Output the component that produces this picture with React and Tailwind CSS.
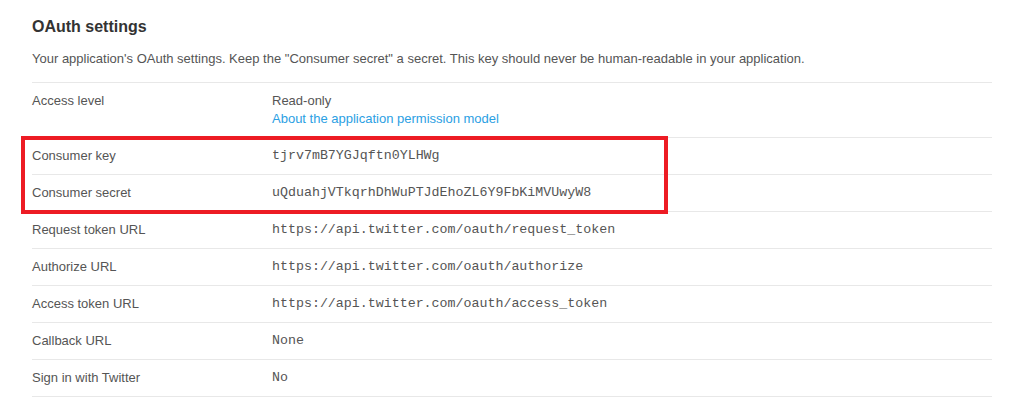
import React from 'react';

const rows = [
  { label: 'Access level', value: 'Read-only', link: 'About the application permission model', plain: true },
  { label: 'Consumer key', value: 'tjrv7mB7YGJqftn0YLHWg' },
  { label: 'Consumer secret', value: 'uQduahjVTkqrhDhWuPTJdEhoZL6Y9FbKiMVUwyW8' },
  { label: 'Request token URL', value: 'https://api.twitter.com/oauth/request_token' },
  { label: 'Authorize URL', value: 'https://api.twitter.com/oauth/authorize' },
  { label: 'Access token URL', value: 'https://api.twitter.com/oauth/access_token' },
  { label: 'Callback URL', value: 'None' },
  { label: 'Sign in with Twitter', value: 'No' },
];

function Row({ row }) {
  return (
    <div className="flex border-b border-[#e8e8e8] py-[9px] leading-[18px]">
      <div className="w-[240px] shrink-0 text-[13px] text-[#555]">{row.label}</div>
      <div className="flex flex-col">
        {row.plain ? (
          <>
            <span className="text-[13px] text-[#555]">{row.value}</span>
            <a className="text-[13px] text-[#2ba0e3] cursor-pointer">{row.link}</a>
          </>
        ) : (
          <span className="font-['Liberation_Mono','Courier_New',monospace] text-[13.3px] text-[#555]">{row.value}</span>
        )}
      </div>
    </div>
  );
}

export default function App() {
  return (
    <div className="min-h-screen bg-white font-['Liberation_Sans',Arial,sans-serif]">
      <div className="relative ml-[32px] w-[960px]">
        <h2 className="pt-[17px] text-[16px] leading-[20px] font-bold text-[#333]">OAuth settings</h2>
        <p className="mt-[13px] text-[13px] leading-[18px] text-[#555]">
          Your application's OAuth settings. Keep the "Consumer secret" a secret. This key should never be human-readable in your application.
        </p>
        <div className="mt-[14px] border-t border-[#e8e8e8]">
          {rows.map(r => <Row key={r.label} row={r} />)}
        </div>
        {/* red highlight around the consumer credentials */}
        <div className="pointer-events-none absolute left-[-11px] top-[136px] h-[78px] w-[647px] border-4 border-[#ed1c24]" />
      </div>
    </div>
  );
}
